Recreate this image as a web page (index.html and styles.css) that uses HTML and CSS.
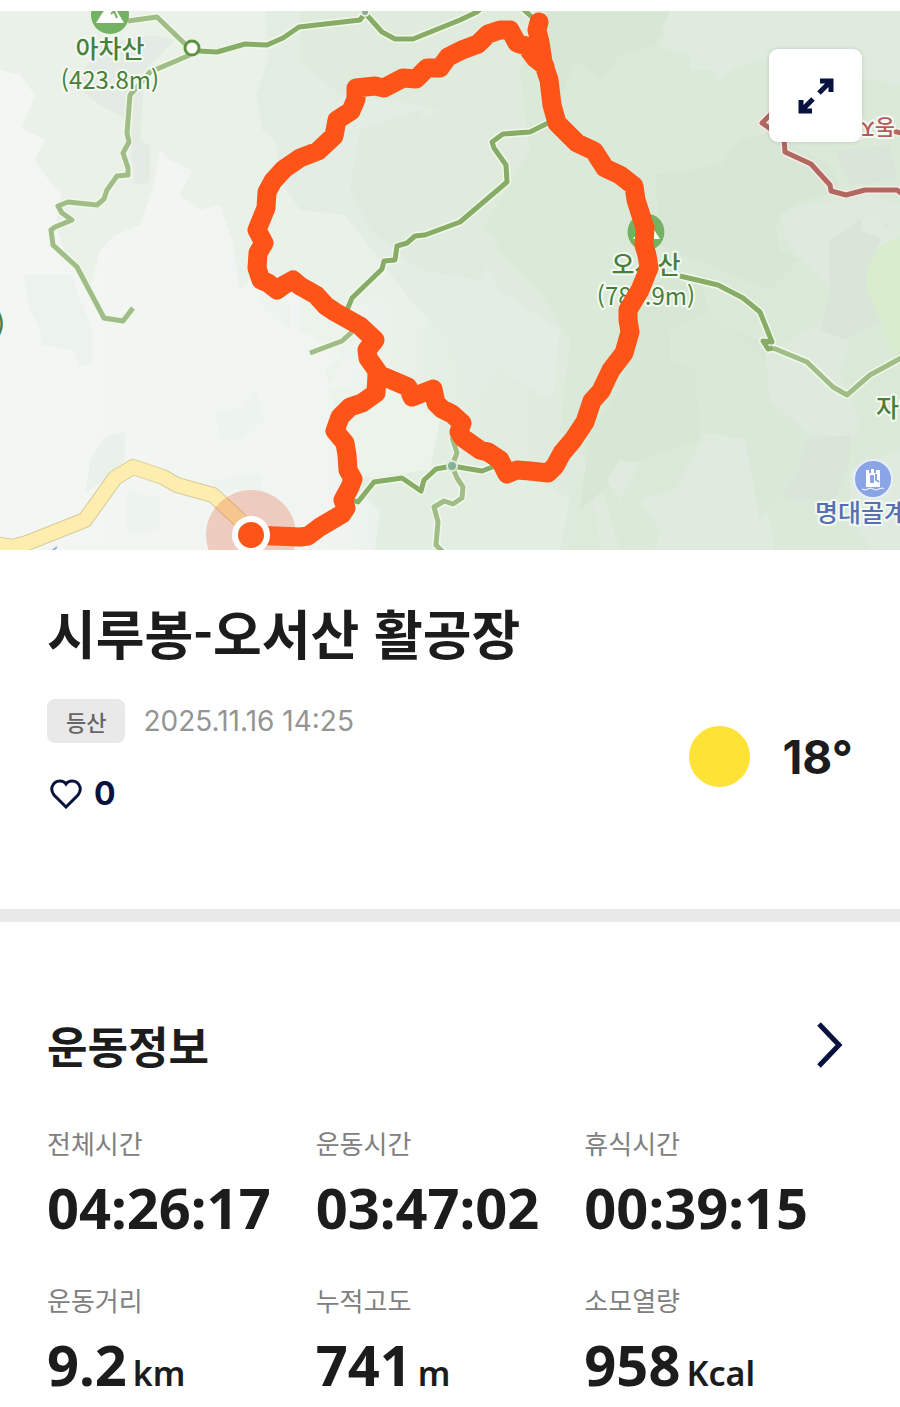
FILE: index.html
```
<!DOCTYPE html>
<html lang="ko">

<head>
    <meta charset="UTF-8">
    <meta name="viewport" content="width=device-width, initial-scale=1.0">
    <title>시루봉-오서산 활공장</title>
    <link rel="stylesheet" href="styles.css">
</head>

<body>
    <!-- 지도 -->
    <div class="map">
        <svg class="map_img" viewBox="0 11 900 539" role="img" aria-label="등산 경로 지도">
            <defs>
                <linearGradient id="land">
                    <stop offset="0" stop-color="#f3f6f3" />
                    <stop offset="0.36" stop-color="#f1f5f1" />
                    <stop offset="0.5" stop-color="#e4eee3" />
                    <stop offset="0.7" stop-color="#dae9d8" />
                    <stop offset="1" stop-color="#dbe8da" />
                </linearGradient>
            </defs>
            <rect y="11" width="900" height="539" fill="url(#land)" />

            <!-- 지형 -->
            <path fill="#e9f1e9" d="M0 11H560V250L520 300L450 290L420 330L380 300L340 310L300 290L260 270L240 290L232 240L220 205L200 210L180 195L192 170L170 160L160 150L152 190L140 225L115 235L100 250L90 290L70 265L55 225L62 195L50 182L35 160L45 140L22 128L35 95L20 75L0 70Z" />
            <path fill="#e3ede3" d="M265 11H600V330L550 400L500 370L470 400L450 340L410 300L380 260L345 215L300 210L280 180L275 140L262 130L256 95L268 60Z" />
            <path fill="#dfebdd" d="M300 11H900V550H600L590 480L550 440L560 330L500 290L470 240L400 200L400 160L360 200L355 150L440 110L390 100L340 95L300 60Z" />
            <path fill="#dbe9d8" d="M520 70L560 30H900V550H620L600 480L560 430L570 340L540 290L480 235L530 150Z" />
            <path fill="#dfebde" d="M360 130L420 110L440 160L430 200L500 240L480 280L420 270L370 230L350 190Z" />
            <path fill="#e3eee3" d="M390 400L440 420L480 460L540 480L570 500L560 550H375L380 510L355 490L350 440Z" />
            <path fill="#ebf3eb" d="M330 390L385 380L440 420L430 470L350 480ZM300 290L360 330L330 385L325 370L345 355L300 330Z" />
            <path fill="#e3ebe4" d="M100 45L150 35L175 40L145 70L140 140L150 145L150 183L135 184L128 120L100 105L75 85Z" />
            <path fill="#ecf2ec" d="M24 275H72L80 300L92 330V365H80L74 350L42 345L40 330L30 310Z" />
            <path fill="#eaf0ea" d="M105 437L125 432V460L105 480L86 492L90 460Z" />
            <path fill="#edf3ed" d="M215 412L243 408L255 388L265 420L240 440L220 440ZM127 490L160 498V530L127 534ZM210 480L262 474V490L215 488ZM255 285L290 300V330L265 310Z" />
            <path fill="#d7e6d5" d="M545 11H670L655 45L620 55L600 80L575 60L560 100ZM655 175L720 165L740 140L770 132L830 165L840 190L790 205L775 225L780 250L800 260L770 290L660 245Z" />
            <path fill="#d7e6d5" d="M640 300L670 270L700 280L710 320L780 350L765 380L700 380L700 440L640 460L580 510L590 430L620 390Z" />
            <path fill="#e0ebdf" d="M670 11H900V85L845 75L800 60L760 60L735 68L718 83L712 70H690V55L660 48Z" />
            <path fill="#dfeade" d="M780 215L800 205L850 200L860 190L900 205V240L870 250L840 270L830 290L785 240ZM765 355L820 322L850 340L840 375L860 420L855 437L810 435L770 400Z" />
            <path fill="#dae5da" d="M835 150L890 145L897 180L850 185ZM830 240L860 220L890 225L875 250L885 320L845 340L820 330L830 290ZM805 440L850 435L850 460L835 500L790 500L775 490L800 460Z" />
            <path fill="#e0ebdf" d="M675 490L705 434L745 438L765 495L775 550H655L660 530L640 500ZM606 480L620 460L640 463L620 500Z" />
            <path fill="#dae8d8" d="M670 330L710 310L765 360L770 400L805 430L800 470L775 500L760 520L745 440L700 430L695 370L670 360Z" />
            <path fill="#e0ebdf" d="M860 230Q875 235 900 250V240L865 210ZM850 470L900 450V550H870L850 510Z" />
            <path fill="#d8ecce" d="M900 238Q880 240 871 262Q862 275 868 290Q882 322 893 355H900Z" />

            <!-- 도로 -->
            <path class="road_edge" d="M-5 544L13 547L27 543L85 520L115 478L133 467L163 477L177 485L213 495L245 525" />
            <path class="road" d="M-5 544L13 547L27 543L85 520L115 478L133 467L163 477L177 485L213 495L245 525" />
            <path d="M52 551L57 547" stroke="#8fb5e8" stroke-width="2" />

            <!-- 등산로 -->
            <g class="trail_edge">
                <path d="M128 21L157 17L185 44M190 55L150 72L130 95L127 133L129 142L123 153L128 168V175L117 176L107 190L104 199L97 205L68 202L58 206L62 213L72 220L55 227L51 230L53 245L77 267L104 318L123 321L133 308" />
                <path d="M198 51L217 52L245 44L267 45L283 38L299 27L360 20L365 13L382 32L395 39H413L460 20L477 12L485 5M522 8L535 20" />
                <path d="M548 123L530 132L503 134L492 142L494 148L506 165L507 182L460 222L425 235L415 236L407 243L397 246L395 260L384 261L382 269L352 298L347 310M352 332L342 341L310 353" />
                <path d="M452 437L457 453L452 466L457 478L463 487L462 498L453 504L444 501L434 507L438 522L436 545L444 553" />
                <path d="M352 500L358 502L374 482L402 478L421 491L424 480L436 469L452 466L482 471L495 466" />
                <path d="M680 276L718 285L743 298L760 312L772 342L763 341L768 349L773 348L807 362L833 387L847 395L870 375L905 356" />
            </g>
            <g class="trail trail_light">
                <path d="M128 21L157 17L185 44M190 55L150 72L130 95L127 133L129 142L123 153L128 168V175L117 176L107 190L104 199L97 205L68 202L58 206L62 213L72 220L55 227L51 230L53 245L77 267L104 318L123 321L133 308" />
                <path d="M352 332L342 341L310 353" />
                <path d="M452 437L457 453L452 466L457 478L463 487L462 498L453 504L444 501L434 507L438 522L436 545L444 553" />
                <path d="M773 348L807 362L833 387L847 395L870 375L905 356" />
            </g>
            <g class="trail">
                <path d="M198 51L217 52L245 44L267 45L283 38L299 27L360 20L365 13L382 32L395 39H413L460 20L477 12L485 5M522 8L535 20" />
                <path d="M548 123L530 132L503 134L492 142L494 148L506 165L507 182L460 222L425 235L415 236L407 243L397 246L395 260L384 261L382 269L352 298L347 310" />
                <path d="M352 500L358 502L374 482L402 478L421 491L424 480L436 469L452 466L482 471L495 466" />
                <path d="M680 276L718 285L743 298L760 312L772 342L763 341L768 349L773 348" />
            </g>
            <circle cx="192" cy="48" r="7" fill="#fff" stroke="#5d9440" stroke-width="3" />
            <circle cx="365" cy="12" r="4" fill="#8fae94" stroke="#e5efe5" stroke-width="2" />
            <circle cx="452" cy="466" r="5" fill="#86b094" stroke="#dbe9dc" stroke-width="2" />

            <!-- 행정 경계 -->
            <path class="border_edge" d="M772 113L762 123L772 130M784 138L785 152L811 164L830 185L831 191L846 195L865 190H897L905 196M893 131L905 134" />
            <path class="border" d="M772 113L762 123L772 130M784 138L785 152L811 164L830 185L831 191L846 195L865 190H897L905 196M893 131L905 134" />
            <text class="place place_red" transform="translate(895 120) rotate(180)">동자</text>

            <!-- 산, 명소 -->
            <circle cx="110" cy="15" r="19" fill="#74b263" />
            <path fill="#fff" d="M96 23L107 6H114L124 23Z" />
            <path fill="none" stroke="#74b263" stroke-width="2" d="M111 14L114 11L117 18" />
            <text class="place" x="110" y="58">아차산</text>
            <text class="place height" x="110" y="89">(423.8m)</text>

            <circle cx="646" cy="232" r="19" fill="#74b263" stroke="#e0efdc" />
            <path fill="#fff" d="M633 239L644 222H649L660 239Z" />
            <text class="place" x="646" y="274">오서산</text>
            <text class="place height" x="646" y="305">(789.9m)</text>

            <text class="place place_start" x="-4" y="333">)</text>
            <text class="place place_start" x="876" y="417">자연</text>

            <circle cx="873" cy="479" r="19" fill="#8aa5e5" stroke="#e8effa" stroke-width="2" />
            <path fill="#fff" d="M866 470H869V473H871V469H874V473H876V470H880V487H866Z" />
            <path fill="none" stroke="#8aa5e5" stroke-width="2" d="M871 476V482H873V476ZM876 474V480L879 482" />
            <path fill="none" stroke="#fff" d="M862 489Q865 491 868 489T873 489T879 489T884 489" />
            <text class="place place_blue" x="815" y="522">명대골계곡</text>

            <!-- 이동 경로 -->
            <circle cx="251" cy="535" r="45" fill="#e8502c" fill-opacity="0.25" />
            <g class="route">
                <path d="M251 535L300 537L308 536L320 527L342 514L346 508L343 500L350 487L353 479L348 470L347 455L345 443L340 437L335 431L340 417L350 407L362 403L376 393L377 375" />
                <path d="M539 22L537 30L540 42L543 62L549 80L552 105L557 123L568 134L577 143L594 151L605 168L620 175L634 186L636 200L645 228L644 245L647 255L649 268L640 290L628 310L628 320L630 332L624 353L611 370L601 391L592 401L585 422L573 440L562 453L555 466L548 473L530 471L517 470L507 474L500 460L488 452L480 450L463 438L459 432L462 423L452 414L442 409L436 403L433 389L420 394L412 397L408 387L380 375L368 358L367 350L375 340L360 326L335 312L326 306L316 295L300 286L293 280L284 285L277 290L268 283L261 280L257 268L258 253L264 243L257 230L266 208L267 192L273 181L284 169L300 158L318 151L334 136L337 120L351 111L356 99V88L375 86L384 88L403 78L416 79L427 68L440 68L448 57L462 50L478 44L488 34L500 30H510L517 43L526 46L535 58L545 66" />
            </g>
            <circle cx="251" cy="535" r="16" fill="#ff5418" stroke="#fff" stroke-width="6" />
        </svg>

        <button class="expand" type="button" aria-label="지도 확대">
            <svg width="36" height="36" viewBox="0 0 36 36" fill="none" stroke="#07123f" stroke-width="5">
                <path d="M22 3H33V14M32 4L21 15" />
                <path d="M3 22V33H14M4 32L15 21" />
            </svg>
        </button>
    </div>

    <!-- 기록 정보 -->
    <section class="info">
        <h1>시루봉-오서산 활공장</h1>
        <div class="summary">
            <div>
                <p class="meta">
                    <span class="badge">등산</span>
                    <time datetime="2025-11-16T14:25">2025.11.16 14:25</time>
                </p>
                <button class="like" type="button" aria-label="좋아요">
                    <svg width="32" height="30" viewBox="0 0 32 30" fill="none" stroke="#07123f" stroke-width="3">
                        <path d="M16 28L4 16Q1 12 2 8Q4 2 10 2Q14 2 16 5Q18 2 22 2Q28 2 30 8Q31 12 28 16Z" />
                    </svg>
                    <span>0</span>
                </button>
            </div>
            <div class="weather">
                <span class="sun"></span>
                <span>18°</span>
            </div>
        </div>
    </section>

    <!-- 운동 정보 -->
    <section class="exercise">
        <div class="heading">
            <h2>운동정보</h2>
            <a href="#" aria-label="운동정보 더보기">
                <svg width="26" height="46" viewBox="0 0 26 46" fill="none" stroke="#07123f" stroke-width="5">
                    <path d="M2 2L22 23L2 44" />
                </svg>
            </a>
        </div>
        <dl class="stats">
            <div>
                <dt>전체시간</dt>
                <dd>04:26:17</dd>
            </div>
            <div>
                <dt>운동시간</dt>
                <dd>03:47:02</dd>
            </div>
            <div>
                <dt>휴식시간</dt>
                <dd>00:39:15</dd>
            </div>
            <div>
                <dt>운동거리</dt>
                <dd>9.2<small>km</small></dd>
            </div>
            <div>
                <dt>누적고도</dt>
                <dd>741<small>m</small></dd>
            </div>
            <div>
                <dt>소모열량</dt>
                <dd>958<small>Kcal</small></dd>
            </div>
        </dl>
    </section>
</body>

</html>
```
FILE: styles.css
```
* {
    margin: 0;
    padding: 0;
    box-sizing: border-box;
}

body {
    padding-top: 11px;
    background-color: #fff;
    color: #1c1c1c;
    font-family: "Noto Sans CJK KR", sans-serif;
}

button {
    border: none;
    background: none;
    font: inherit;
    color: inherit;
    cursor: pointer;
}

svg {
    display: block;
}


/* -------------------------지도------------------------- */
.map {
    position: relative;
}

.map_img {
    width: 100%;
}

.map_img path {
    stroke-linejoin: round;
}

.road_edge,
.road,
.trail_edge,
.trail,
.border_edge,
.border,
.route {
    fill: none;
}

.road_edge {
    stroke: #d8cb98;
    stroke-width: 16px;
}

.road {
    stroke: #fdeeb0;
    stroke-width: 14px;
}

.trail_edge {
    stroke: #f1f8ea;
    stroke-width: 8px;
}

.trail {
    stroke: #87ac66;
    stroke-width: 5px;
}

.trail_light {
    stroke: #a0bd88;
}

.border_edge {
    stroke: #f6ebe7;
    stroke-width: 8px;
}

.border {
    stroke: #b0685f;
    stroke-width: 5px;
}

.route {
    stroke: #ff5418;
    stroke-width: 19px;
    stroke-linecap: round;
}

.place {
    font-size: 25px;
    font-weight: 500;
    text-anchor: middle;
    fill: #47803a;
    stroke: #f4f9f2;
    stroke-width: 4px;
    stroke-linejoin: round;
    paint-order: stroke;
}

.height {
    font-size: 24px;
    font-weight: 400;
}

.place_start,
.place_blue,
.place_red {
    text-anchor: start;
}

.place_blue {
    fill: #5470b4;
}

.place_red {
    font-size: 22px;
    fill: #b85a5a;
}

.expand {
    position: absolute;
    top: 38px;
    right: 38px;
    width: 93px;
    height: 93px;
    display: flex;
    align-items: center;
    justify-content: center;
    border-radius: 9px;
    background-color: #fff;
    box-shadow: 0 0 4px rgba(0, 0, 0, 0.15);
}


/* -------------------------기록 정보------------------------- */
.info {
    padding: 50px 47px 95px;
    border-bottom: 13px solid #e9e9e9;
}

h1 {
    font-size: 53px;
    line-height: 64px;
}

.summary {
    display: flex;
    align-items: center;
    justify-content: space-between;
    margin-top: 35px;
}

.meta {
    display: flex;
    align-items: center;
    gap: 18px;
    color: #949494;
    font-family: Inter, sans-serif;
    font-size: 28px;
}

.badge {
    padding: 0 19px;
    border-radius: 8px;
    background-color: #e9e9e9;
    color: #666;
    font-family: "Noto Sans CJK KR", sans-serif;
    font-size: 22px;
    font-weight: 500;
    line-height: 44px;
}

.like {
    display: flex;
    align-items: center;
    gap: 12px;
    margin: 31px 0 0 3px;
    color: #07123f;
    font-family: Inter, sans-serif;
    font-size: 32px;
    font-weight: 700;
    line-height: 40px;
}

.weather {
    display: flex;
    align-items: center;
    gap: 32px;
    font-family: Inter, sans-serif;
    font-size: 46px;
    font-weight: 700;
}

.sun {
    width: 61px;
    height: 61px;
    border-radius: 50%;
    background-color: #fee235;
}


/* -------------------------운동 정보------------------------- */
.exercise {
    padding: 95px 47px 3px;
}

.heading {
    display: flex;
    align-items: center;
    justify-content: space-between;
}

.heading a {
    padding-right: 10px;
}

h2 {
    font-size: 44px;
    line-height: 56px;
}

.stats {
    display: grid;
    grid-template-columns: repeat(3, 1fr);
    row-gap: 43px;
    margin-top: 52px;
}

dt {
    color: #808080;
    font-size: 26px;
    line-height: 36px;
}

dd {
    margin-top: 14px;
    font-family: "Noto Sans", sans-serif;
    font-size: 56px;
    font-weight: 700;
    line-height: 64px;
    white-space: nowrap;
}

dd small {
    margin-left: 6px;
    font-size: 34px;
    font-weight: 600;
}
```
